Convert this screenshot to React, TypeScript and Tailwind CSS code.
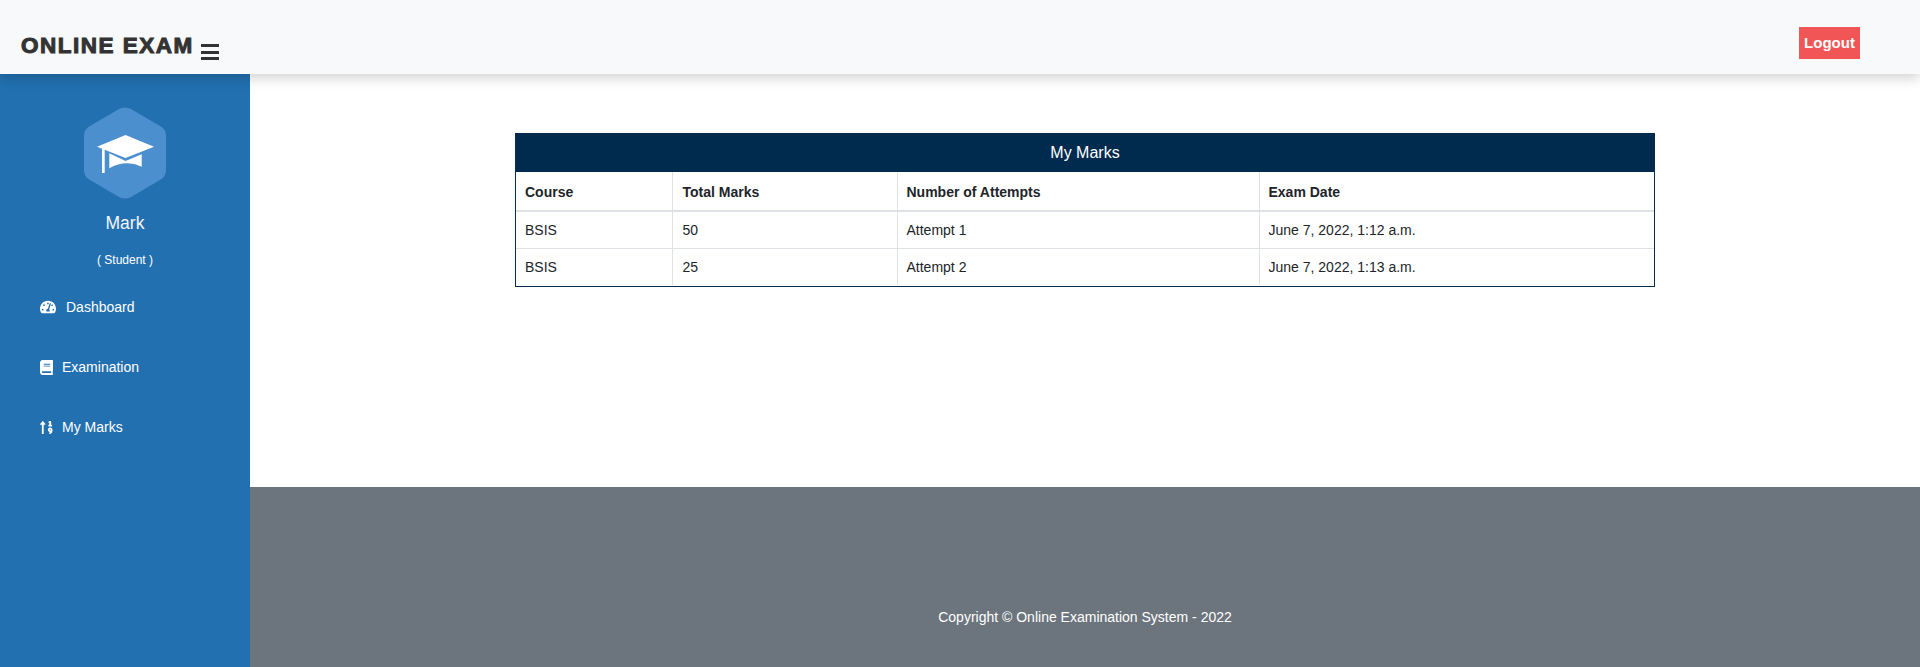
import { FaBook, FaTachometerAlt, FaSortNumericUp } from "react-icons/fa";

const rows = [
  { course: "BSIS", marks: "50", attempt: "Attempt 1", date: "June 7, 2022, 1:12 a.m." },
  { course: "BSIS", marks: "25", attempt: "Attempt 2", date: "June 7, 2022, 1:13 a.m." },
];

const Sidebar = () => (
  <aside className="w-[250px] shrink-0 bg-[#2270b0] flex flex-col items-center pt-[33px] text-white">
    <svg width="82" height="92" viewBox="0 0 82 92" className="-ml-px">
      <path
        d="M35 2 Q41 -1 47 2 L76 19 Q82 22 82 29 L82 63 Q82 70 76 73 L47 90 Q41 93 35 90 L6 73 Q0 70 0 63 L0 29 Q0 22 6 19 Z"
        fill="#4c8fce"
      />
      <path d="M41.5 28 L70 39.7 L41.5 51 L13 39.7 Z" fill="#fff" />
      <path d="M25.3 46.3 L41.5 54 L57.7 47.3 L57.7 59.7 Q41.5 52 25.3 61.3 Z" fill="#fff" />
      <rect x="18" y="41" width="2.7" height="25" fill="#fff" />
    </svg>
    <div className="mt-[12px] text-[17.5px] leading-[24px] text-[#f4f6fa]">Mark</div>
    <div className="mt-[16px] text-xs leading-[18px]">( Student )</div>
    <nav className="self-stretch mt-[30px] flex flex-col gap-[44px] pl-10 text-sm leading-[16px]">
      <a className="flex items-center h-4">
        <FaTachometerAlt className="w-4 h-4 mr-[10px]" />
        Dashboard
      </a>
      <a className="flex items-center h-4">
        <FaBook className="w-[13px] h-[15px] mr-[9px]" />
        Examination
      </a>
      <a className="flex items-center h-4">
        <FaSortNumericUp className="w-[13px] h-[15px] mr-[9px]" />
        My Marks
      </a>
    </nav>
  </aside>
);

export default function App() {
  return (
    <div className="h-[667px] overflow-hidden flex flex-col bg-white font-['Liberation_Sans',Arial,sans-serif]">
      <header className="relative z-10 h-[74px] shrink-0 bg-[#f8f9fa] shadow-[0_4px_12px_rgba(0,0,0,0.18)] flex items-center pl-[21px] pr-[60px]">
        <div className="flex items-end pt-[18px]">
          <span className="text-[22.5px] leading-[26px] font-bold tracking-[1.5px] text-[#333] [-webkit-text-stroke:1px_#333]">
            ONLINE EXAM
          </span>
          <span className="ml-[7px] -mb-[1px] flex flex-col gap-[3.5px] w-[18px]">
            <span className="h-[3px] bg-[#333]" />
            <span className="h-[3px] bg-[#333]" />
            <span className="h-[3px] bg-[#333]" />
          </span>
        </div>
        <button className="ml-auto mt-[11px] pt-[2px] h-8 w-[61px] bg-[#f25555] text-white text-[15px] font-bold">
          Logout
        </button>
      </header>
      <div className="flex flex-1 min-h-0">
        <Sidebar />
        <div className="flex-1 flex flex-col">
          <main className="h-[413px] pt-[59px] pl-[265px]">
            <div className="w-[1140px] border border-t-0 border-[#002b4e] pb-px">
              <div className="h-[39px] -mx-px bg-[#002b4e] text-white text-base flex items-center justify-center">
                My Marks
              </div>
              <table className="w-full table-fixed border-collapse text-sm text-[#212529]">
                <colgroup>
                  <col className="w-[156px]" />
                  <col className="w-[225px]" />
                  <col className="w-[362px]" />
                  <col />
                </colgroup>
                <thead>
                  <tr className="h-[39px] border-b-2 border-[#dee2e6] font-bold">
                    <th className="pt-[2px] px-[9px] text-left">Course</th>
                    <th className="pt-[2px] px-[10px] text-left border-l border-[#dee2e6]">Total Marks</th>
                    <th className="pt-[2px] px-[9px] text-left border-l border-[#dee2e6]">Number of Attempts</th>
                    <th className="pt-[2px] px-[9px] text-left border-l border-[#dee2e6]">Exam Date</th>
                  </tr>
                </thead>
                <tbody>
                  {rows.map((r, i) => (
                    <tr key={r.attempt} className={`h-[37px] ${i == 0 ? "border-b border-[#dee2e6]" : ""}`}>
                      <td className="px-[9px]">{r.course}</td>
                      <td className="px-[10px] border-l border-[#dee2e6]">{r.marks}</td>
                      <td className="px-[9px] border-l border-[#dee2e6]">{r.attempt}</td>
                      <td className="px-[9px] border-l border-[#dee2e6]">{r.date}</td>
                    </tr>
                  ))}
                </tbody>
              </table>
            </div>
          </main>
          <footer className="flex-1 bg-[#6c757d] text-white text-sm flex justify-center pt-[122px]">
            <span className="leading-[16px] h-4">Copyright © Online Examination System - 2022</span>
          </footer>
        </div>
      </div>
    </div>
  );
}
